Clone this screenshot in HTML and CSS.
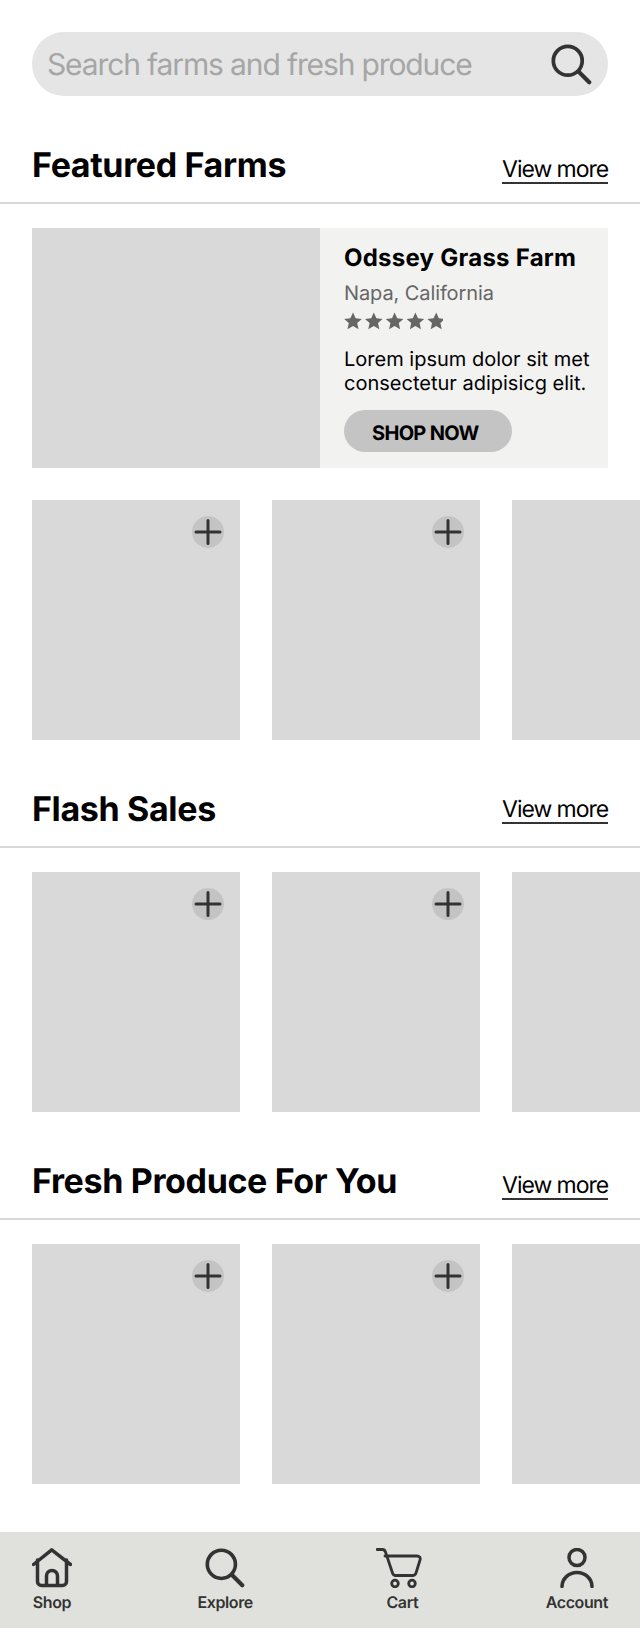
FILE: index.html
```html
<!DOCTYPE html>
<html lang="en">
<head>
<meta charset="utf-8">
<title>Farms</title>
<link rel="stylesheet" href="styles.css">
</head>
<body>
<svg class="defs" width="0" height="0" aria-hidden="true">
  <symbol id="plus" viewBox="0 0 32 32"><circle cx="16" cy="16" r="16" fill="#c4c4c4"/><path d="M16 4.500V27.500M4 16H28" fill="none" stroke="#333" stroke-width="3" stroke-linecap="round"/></symbol>
  <symbol id="search" viewBox="0 0 44 44"><circle cx="18" cy="18" r="15.500" fill="none" stroke="#333" stroke-width="4"/><path d="M29.500 29.500L41 41" fill="none" stroke="#333" stroke-width="4.500" stroke-linecap="round"/></symbol>
</svg>
<main class="page">
  <div class="search">
    <span class="search-text">Search farms and fresh produce</span>
    <svg class="search-icon"><use href="#search"/></svg>
  </div>

  <section class="section">
    <header class="section-head">
      <h2>Featured Farms</h2>
      <a class="more">View more</a>
    </header>
    <div class="hero">
      <div class="hero-img"></div>
      <div class="hero-info">
        <h3>Odssey Grass Farm</h3>
        <p class="loc">Napa, California</p>
        <div class="stars">
          <svg viewBox="0 0 100 20" width="100" height="20"><path id="s" fill="#666" d="M10 1.500l2.600 5.700 6.200.7-4.600 4.200 1.300 6.100L10 15.100l-5.500 3.100 1.300-6.100L1.200 7.900l6.200-.7z"/><use href="#s" x="20.800"/><use href="#s" x="41.600"/><use href="#s" x="62.400"/><use href="#s" x="83.200"/></svg>
        </div>
        <p class="desc">Lorem ipsum dolor sit met consectetur adipisicg elit.</p>
        <a class="shop">SHOP NOW</a>
      </div>
    </div>
    <div class="row">
      <div class="card"><svg class="plus"><use href="#plus"/></svg></div>
      <div class="card"><svg class="plus"><use href="#plus"/></svg></div>
      <div class="card"></div>
    </div>
  </section>

  <section class="section">
    <header class="section-head">
      <h2>Flash Sales</h2>
      <a class="more more-high">View more</a>
    </header>
    <div class="row row-plain">
      <div class="card"><svg class="plus"><use href="#plus"/></svg></div>
      <div class="card"><svg class="plus"><use href="#plus"/></svg></div>
      <div class="card"></div>
    </div>
  </section>

  <section class="section">
    <header class="section-head">
      <h2>Fresh Produce For You</h2>
      <a class="more">View more</a>
    </header>
    <div class="row row-plain">
      <div class="card"><svg class="plus"><use href="#plus"/></svg></div>
      <div class="card"><svg class="plus"><use href="#plus"/></svg></div>
      <div class="card"></div>
    </div>
  </section>
</main>
<nav class="nav">
  <a class="nav-item nav-shop">
    <svg viewBox="0 0 40 40" width="40" height="40"><path d="M1.500 16.500L19.700 1.800 38.500 16.500M5.500 12v21.500a4 4 0 0 0 4 4h21a4 4 0 0 0 4-4V12M14.500 37.500V28a5.500 5.500 0 0 1 11 0v9.500" fill="none" stroke="#333" stroke-width="3.500" stroke-linecap="round" stroke-linejoin="round"/></svg>
    <span>Shop</span>
  </a>
  <a class="nav-item nav-explore">
    <svg viewBox="0 0 44 44" width="40" height="40"><use href="#search"/></svg>
    <span>Explore</span>
  </a>
  <a class="nav-item nav-cart">
    <svg viewBox="0 0 46 40" width="46" height="40"><path d="M1 1.500h5.500c1.500 0 2.500 1 3 2.500l7 21c.5 1.500 1.500 2.500 3 2.500h17c2 0 3-1 3.500-2.500l4-13c.800-2.500-.500-4-3-4H9" fill="none" stroke="#333" stroke-width="2.800" stroke-linecap="round" stroke-linejoin="round"/><circle cx="19" cy="35.500" r="3.300" fill="none" stroke="#333" stroke-width="2.800"/><circle cx="36" cy="35.500" r="3.300" fill="none" stroke="#333" stroke-width="2.800"/></svg>
    <span>Cart</span>
  </a>
  <a class="nav-item nav-account">
    <svg viewBox="0 0 34 40" width="34" height="40"><circle cx="17" cy="9.500" r="8" fill="none" stroke="#333" stroke-width="3.500"/><path d="M2 38.500a15 14 0 0 1 30 0" fill="none" stroke="#333" stroke-width="3.500" stroke-linecap="round"/></svg>
    <span>Account</span>
  </a>
</nav>
</body>
</html>
```

FILE: styles.css
```css
* { box-sizing: border-box; }
html, body { margin: 0; padding: 0; }
body {
  width: 640px;
  height: 1628px;
  overflow: hidden;
  background: #fff;
  font-family: Inter, "Liberation Sans", sans-serif;
  color: #000;
  display: flex;
  flex-direction: column;
  text-rendering: geometricPrecision;
}
.defs { position: absolute; }
.page { flex: 1; padding-top: 32px; min-height: 0; }
.search {
  margin: 0 32px;
  height: 64px;
  border-radius: 32px;
  background: #e5e5e5;
  display: flex;
  align-items: center;
  justify-content: space-between;
  padding: 2px 16px 0 15px;
}
.search-text { font-size: 30px; line-height: 36px; letter-spacing: -1.13px; color: #a6a6a6; }
.search-icon { width: 41px; height: 41px; margin-top: -2px; }
.section { margin-top: 49px; }
.section-head {
  display: flex;
  justify-content: space-between;
  align-items: flex-end;
  padding: 0 32px 16px;
  border-bottom: 2px solid #d9d9d9;
}
.section-head h2 {
  margin: 0;
  font-size: 34px;
  line-height: 41px;
  font-weight: 700;
  letter-spacing: -0.35px;
}
.more {
  font-size: 23px;
  line-height: 25px;
  letter-spacing: -1.05px;
  border-bottom: 2px solid #333;
  margin-bottom: 2px;
}
.more-high { margin-bottom: 6px; }
.hero { display: flex; margin: 24px 32px 32px; height: 240px; }
.hero-img { width: 288px; background: #d9d9d9; }
.hero-info { flex: 1; background: #f2f2f1; padding: 16px 0 0 24px; }
.hero-info h3 { margin: 0; font-size: 24px; line-height: 28px; font-weight: 700; letter-spacing: 0.25px; }
.loc { margin: 9px 0 0; font-size: 20px; line-height: 24px; letter-spacing: -0.1px; color: #666; }
.stars { margin: 6px 0 0 -1px; height: 20px; }
.stars svg { display: block; }
.desc { margin: 16px 0 0; font-size: 20px; line-height: 24px; width: 250px; }
.shop {
  display: flex;
  align-items: center;
  padding: 3px 0 0 28px;
  margin-top: 15px;
  width: 168px;
  height: 42px;
  border-radius: 21px;
  background: #c4c4c4;
  font-size: 20px;
  font-weight: 700;
  letter-spacing: -0.7px;
}
.row { display: flex; gap: 32px; padding-left: 32px; overflow: hidden; }
.row-plain { margin-top: 24px; }
.card {
  position: relative;
  flex: 0 0 208px;
  height: 240px;
  background: #d9d9d9;
}
.plus { position: absolute; top: 16px; right: 16px; width: 32px; height: 32px; }
.nav {
  height: 96px;
  background: #e0e1dd;
  display: flex;
  justify-content: space-between;
  padding: 16px 32px 0;
}
.nav-item {
  display: flex;
  flex-direction: column;
  align-items: center;
  font-size: 16px;
  line-height: 20px;
  font-weight: 600;
  letter-spacing: -0.4px;
  color: #333;
}
.nav-item svg { display: block; margin-bottom: 4px; }
.nav-explore { margin-left: 2px; }
.nav-cart span { padding-left: 6px; }
```
